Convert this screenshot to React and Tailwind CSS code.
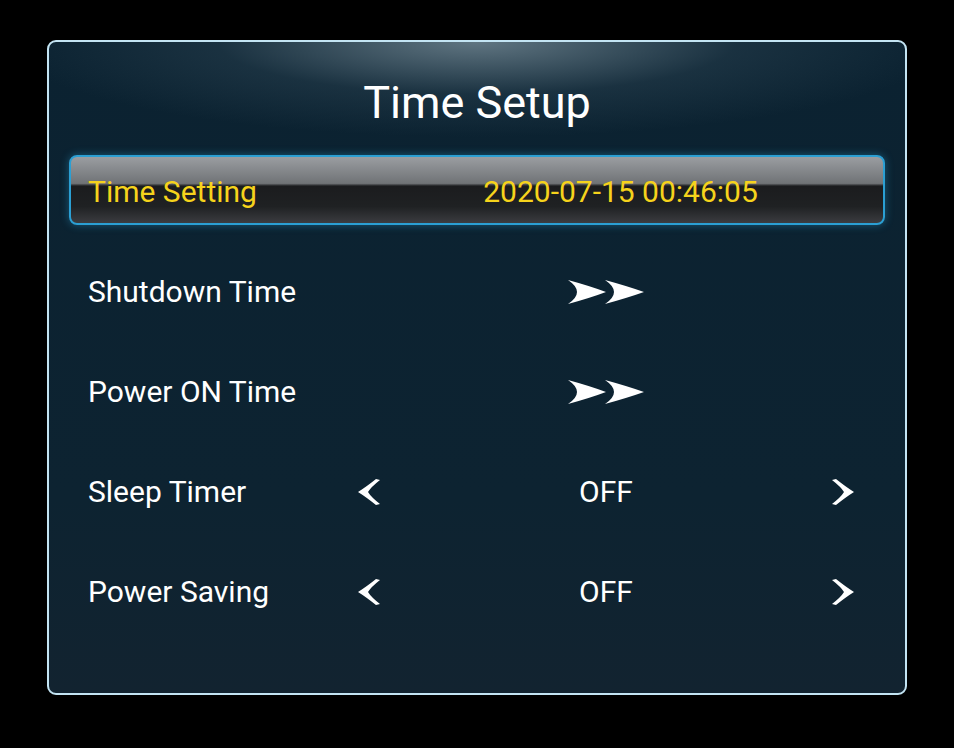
function Chevrons() {
  return (
    <svg width="76" height="26" viewBox="0 0 76 26" className="block">
      <path d="M0 1 Q22 7 38 13 Q22 19 0 25 Q18 13 0 1 Z" fill="#ffffff" />
      <path d="M37 1 Q59 7 76 13 Q59 19 37 25 Q55 13 37 1 Z" fill="#ffffff" />
    </svg>
  )
}

function Arrow({ dir }) {
  return (
    <svg width="22" height="26" viewBox="0 0 22 26" className="block">
      {dir === "left" ? (
        <path d="M18 0 L22 1 Q13 8 10 13 Q13 18 22 25 L18 26 Q8 18 0 13 Q8 8 18 0 Z" fill="#ffffff" />
      ) : (
        <path d="M4 0 L0 1 Q9 8 12 13 Q9 18 0 25 L4 26 Q14 18 22 13 Q14 8 4 0 Z" fill="#ffffff" />
      )}
    </svg>
  )
}

const rows = [
  { label: "Shutdown Time", type: "link" },
  { label: "Power ON Time", type: "link" },
  { label: "Sleep Timer", type: "option", value: "OFF" },
  { label: "Power Saving", type: "option", value: "OFF" },
]

const rowGrid = "grid grid-cols-[270px_22px_452px_22px_1fr] items-center rounded-[8px] border-2 pl-[17px] text-[30px] leading-none"

export default function App() {
  return (
    <div
      className="h-[748px] w-[954px] bg-black pl-[47px] pt-[40px] text-white"
      style={{ fontFamily: "Roboto, 'Noto Sans', sans-serif" }}
    >
      <div className="h-[655px] w-[860px] rounded-[9px] border-[2.5px] border-[#c3e4f3] bg-[radial-gradient(ellipse_470px_95px_at_50%_0%,rgba(165,185,195,0.55),rgba(70,95,110,0.25)_55%,transparent),linear-gradient(to_bottom,#0b2231,#0d2331_70%,#122330)] px-[20px]">
        <div className="flex h-[113px] items-center justify-center pt-[8px] text-[45px] leading-none">
          Time Setup
        </div>

        <div className="flex flex-col gap-[31px]">
          <div className={`${rowGrid} h-[70px] border-[#2b9fd3] bg-[linear-gradient(to_bottom,#9a9da1_0%,#707376_40%,#1b1c1e_44%,#1f2123_75%,#3b3c40_100%)] pt-[4px] text-[#f6d31c] shadow-[0_0_8px_rgba(43,159,211,0.45)]`}>
            <span>Time Setting</span>
            <span className="col-span-4 text-center">2020-07-15 00:46:05</span>
          </div>

          {rows.map((row) => (
            <div key={row.label} className={`${rowGrid} h-[69px] border-transparent pt-[2px]`}>
              <span>{row.label}</span>
              {row.type === "link" ? (
                <div className="col-start-3 flex justify-center">
                  <Chevrons />
                </div>
              ) : (
                <>
                  <Arrow dir="left" />
                  <span className="text-center">{row.value}</span>
                  <Arrow dir="right" />
                </>
              )}
            </div>
          ))}
        </div>
      </div>
    </div>
  )
}
